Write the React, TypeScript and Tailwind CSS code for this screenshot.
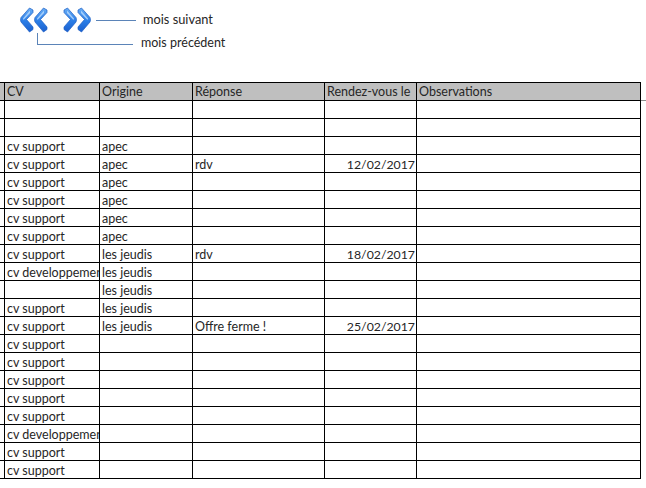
const rows: [string, string, string, string][] = [
  ["", "", "", ""],
  ["", "", "", ""],
  ["cv support", "apec", "", ""],
  ["cv support", "apec", "rdv", "12/02/2017"],
  ["cv support", "apec", "", ""],
  ["cv support", "apec", "", ""],
  ["cv support", "apec", "", ""],
  ["cv support", "apec", "", ""],
  ["cv support", "les jeudis", "rdv", "18/02/2017"],
  ["cv developpement", "les jeudis", "", ""],
  ["", "les jeudis", "", ""],
  ["cv support", "les jeudis", "", ""],
  ["cv support", "les jeudis", "Offre ferme !", "25/02/2017"],
  ["cv support", "", "", ""],
  ["cv support", "", "", ""],
  ["cv support", "", "", ""],
  ["cv support", "", "", ""],
  ["cv support", "", "", ""],
  ["cv developpement", "", "", ""],
  ["cv support", "", "", ""],
  ["cv support", "", "", ""],
];

function Chevron({ flip, x, id }: { flip?: boolean; x: number; id: string }) {
  return (
    <g transform={`translate(${x} 0)${flip ? " translate(13 0) scale(-1 1)" : ""}`}>
      <path d="M9.5 1 L13 3 L13 5.5 L6.5 12.5 L13 20 L13 22.5 L9.5 25 L1 15 Q0 12.5 1 10.5 Z" fill={`url(#${id})`} stroke="#1d5fc4" strokeWidth="0.7" />
      <path d="M10 3.5 L3 11.5 L3.5 13 L10 6 Z" fill="#bcdcff" opacity="0.8" />
    </g>
  );
}

function Arrows() {
  return (
    <svg width="73" height="26" viewBox="0 0 73 26" className="shrink-0">
      <defs>
        <linearGradient id="blue" x1="0" y1="0" x2="0" y2="1">
          <stop offset="0" stopColor="#6aaef5" />
          <stop offset="0.55" stopColor="#2a7de6" />
          <stop offset="1" stopColor="#1a5fce" />
        </linearGradient>
      </defs>
      <Chevron x={1} id="blue" />
      <Chevron x={15} id="blue" />
      <Chevron x={45} id="blue" flip />
      <Chevron x={59} id="blue" flip />
    </svg>
  );
}

function Row({ cells, header }: { cells: string[]; header?: boolean }) {
  return (
    <div className={`grid h-[18px] w-[641px] grid-cols-[4px_95px_93px_132px_92px_225px] border-b border-black ${header ? "bg-[#bfbfbf]" : ""}`}>
      <div />
      {cells.map((c, i) => (
        <div
          key={i}
          className={`overflow-hidden whitespace-nowrap border-l border-black pl-[2px] pr-[1px] text-[#262626] ${header ? "leading-[18px]" : "leading-[19px]"} ${!header && i === 3 ? "text-right text-[12.3px]" : "text-[12.5px]"} ${i === 4 ? "border-r" : ""}`}
        >
          {c}
        </div>
      ))}
    </div>
  );
}

export default function App() {
  return (
    <div className="h-[488px] w-[646px] overflow-hidden bg-white font-['Lato','Liberation_Sans',sans-serif]">
      <div className="h-[82px] pl-[19px] pt-[7px]">
        <div className="flex h-[26px] items-center">
          <Arrows />
          <div className="ml-[4px] h-px w-[40px] bg-[#5b84b8]" />
          <span className="ml-[7px] mb-[2px] text-[12.8px] leading-[14px] text-[#262626]">mois suivant</span>
        </div>
        <div className="flex h-[21px] items-start">
          <div className="ml-[18px] h-[12px] w-[96px] border-b border-l border-[#5b84b8]" />
          <span className="ml-[8px] mt-[3px] text-[12.5px] leading-[14px] text-[#262626]">mois précédent</span>
        </div>
      </div>
      <div className="relative border-t border-black w-[641px]">
        <Row header cells={["CV", "Origine", "Réponse", "Rendez-vous le", "Observations"]} />
        <div className="absolute left-[641px] top-[17px] h-px w-[5px] bg-[#8c8c8c]" />
        {rows.map((r, i) => (
          <Row key={i} cells={[...r, ""]} />
        ))}
      </div>
    </div>
  );
}
